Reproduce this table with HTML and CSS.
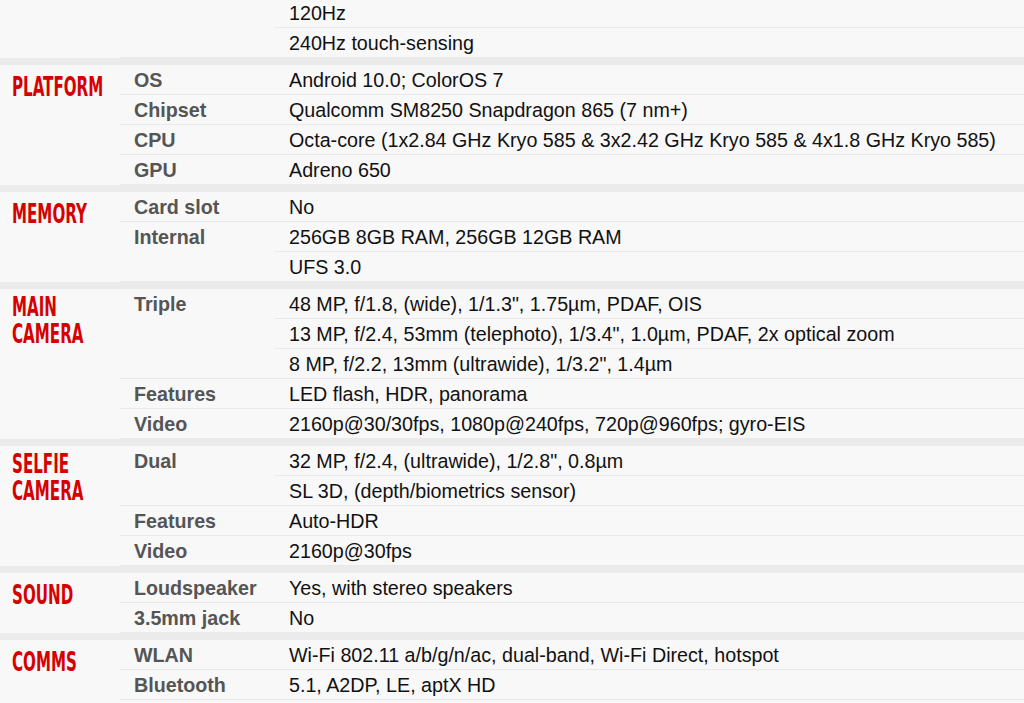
FILE: index.html
```html
<!DOCTYPE html>
<html lang="en">
<head>
<meta charset="utf-8">
<title>Specs</title>
<link rel="stylesheet" href="styles.css">
</head>
<body>
<div class="specs-list">
  <section class="section section--cont">
    <div class="section-title"></div>
    <div class="specs">
      <div class="spec">
        <div class="spec-label"></div>
        <div class="spec-values">
          <div class="val">120Hz</div>
          <div class="val">240Hz touch-sensing</div>
        </div>
      </div>
    </div>
  </section>

  <section class="section">
    <div class="section-title"><span>PLATFORM</span></div>
    <div class="specs">
      <div class="spec"><div class="spec-label">OS</div><div class="spec-values"><div class="val">Android 10.0; ColorOS 7</div></div></div>
      <div class="spec"><div class="spec-label">Chipset</div><div class="spec-values"><div class="val">Qualcomm SM8250 Snapdragon 865 (7 nm+)</div></div></div>
      <div class="spec"><div class="spec-label">CPU</div><div class="spec-values"><div class="val">Octa-core (1x2.84 GHz Kryo 585 &amp; 3x2.42 GHz Kryo 585 &amp; 4x1.8 GHz Kryo 585)</div></div></div>
      <div class="spec"><div class="spec-label">GPU</div><div class="spec-values"><div class="val">Adreno 650</div></div></div>
    </div>
  </section>

  <section class="section">
    <div class="section-title"><span>MEMORY</span></div>
    <div class="specs">
      <div class="spec"><div class="spec-label">Card slot</div><div class="spec-values"><div class="val">No</div></div></div>
      <div class="spec"><div class="spec-label">Internal</div><div class="spec-values"><div class="val">256GB 8GB RAM, 256GB 12GB RAM</div><div class="val">UFS 3.0</div></div></div>
    </div>
  </section>

  <section class="section">
    <div class="section-title section-title--two"><span class="line">MAIN</span><span class="line">CAMERA</span></div>
    <div class="specs">
      <div class="spec"><div class="spec-label">Triple</div><div class="spec-values">
        <div class="val">48 MP, f/1.8, (wide), 1/1.3", 1.75µm, PDAF, OIS</div>
        <div class="val">13 MP, f/2.4, 53mm (telephoto), 1/3.4", 1.0µm, PDAF, 2x optical zoom</div>
        <div class="val">8 MP, f/2.2, 13mm (ultrawide), 1/3.2", 1.4µm</div>
      </div></div>
      <div class="spec"><div class="spec-label">Features</div><div class="spec-values"><div class="val">LED flash, HDR, panorama</div></div></div>
      <div class="spec"><div class="spec-label">Video</div><div class="spec-values"><div class="val">2160p@30/30fps, 1080p@240fps, 720p@960fps; gyro-EIS</div></div></div>
    </div>
  </section>

  <section class="section">
    <div class="section-title section-title--two"><span class="line">SELFIE</span><span class="line">CAMERA</span></div>
    <div class="specs">
      <div class="spec"><div class="spec-label">Dual</div><div class="spec-values">
        <div class="val">32 MP, f/2.4, (ultrawide), 1/2.8", 0.8µm</div>
        <div class="val">SL 3D, (depth/biometrics sensor)</div>
      </div></div>
      <div class="spec"><div class="spec-label">Features</div><div class="spec-values"><div class="val">Auto-HDR</div></div></div>
      <div class="spec"><div class="spec-label">Video</div><div class="spec-values"><div class="val">2160p@30fps</div></div></div>
    </div>
  </section>

  <section class="section">
    <div class="section-title"><span>SOUND</span></div>
    <div class="specs">
      <div class="spec"><div class="spec-label">Loudspeaker</div><div class="spec-values"><div class="val">Yes, with stereo speakers</div></div></div>
      <div class="spec"><div class="spec-label">3.5mm jack</div><div class="spec-values"><div class="val">No</div></div></div>
    </div>
  </section>

  <section class="section">
    <div class="section-title"><span>COMMS</span></div>
    <div class="specs">
      <div class="spec"><div class="spec-label">WLAN</div><div class="spec-values"><div class="val">Wi-Fi 802.11 a/b/g/n/ac, dual-band, Wi-Fi Direct, hotspot</div></div></div>
      <div class="spec"><div class="spec-label">Bluetooth</div><div class="spec-values"><div class="val">5.1, A2DP, LE, aptX HD</div></div></div>
    </div>
  </section>
</div>
</body>
</html>
```

FILE: styles.css
```css
html, body {
  margin: 0;
  padding: 0;
  background: #f8f8f8;
}

body {
  font-family: "Liberation Sans", Arial, sans-serif;
  font-size: 19.7px;
  color: #111;
  overflow: hidden;
}

.specs-list {
  margin-top: -2px;
}

.section {
  display: flex;
  border-top: 7px solid #ebebeb;
}

.section--cont {
  border-top: 0;
}

.section-title {
  width: 120px;
  flex-shrink: 0;
  padding: 9px 0 0 12px;
  box-sizing: border-box;
  font-family: "DejaVu Sans Condensed", "DejaVu Sans", sans-serif;
  font-weight: bold;
  font-size: 21px;
  line-height: 21px;
  color: #d50000;
  white-space: nowrap;
}

.section-title--two {
  padding-top: 5px;
}

.section-title span {
  display: block;
  height: 26.5px;
  transform: scale(0.8, 1.28);
  transform-origin: left top;
}

.specs {
  flex: 1;
  min-width: 0;
}

.spec {
  display: flex;
  border-bottom: 1px solid #e9e9e9;
}

.spec-label {
  width: 155px;
  flex-shrink: 0;
  box-sizing: border-box;
  padding-left: 14px;
  padding-top: 1px;
  font-weight: bold;
  color: #555;
  line-height: 28px;
}

.spec-values {
  flex: 1;
  min-width: 0;
}

.val {
  padding-left: 14px;
  padding-top: 1px;
  line-height: 28px;
  height: 28px;
  white-space: nowrap;
  border-bottom: 1px solid #e9e9e9;
}

.val:last-child {
  border-bottom: 0;
}
```
